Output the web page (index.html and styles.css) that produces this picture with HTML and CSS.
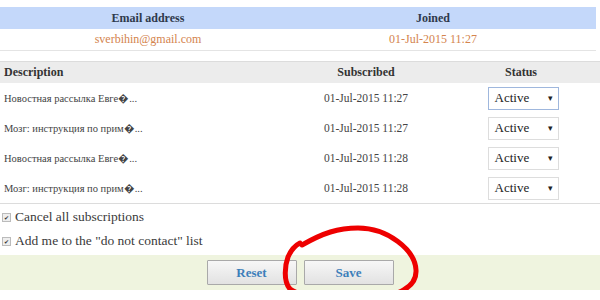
FILE: index.html
```html
<!DOCTYPE html>
<html lang="en">
<head>
  <meta charset="UTF-8">
  <title>Subscriptions</title>
  <link rel="stylesheet" href="styles.css">
</head>
<body>
  <div class="page">
    <table class="user">
      <tr>
        <th class="col-email">Email address</th>
        <th class="col-joined">Joined</th>
      </tr>
      <tr>
        <td class="col-email">sverbihin@gmail.com</td>
        <td class="col-joined">01-Jul-2015 11:27</td>
      </tr>
    </table>

    <table class="subs">
      <tr>
        <th class="desc">Description</th>
        <th class="date">Subscribed</th>
        <th class="status">Status</th>
      </tr>
      <tr>
        <td class="desc">Новостная рассылка Евге�...</td>
        <td class="date">01-Jul-2015 11:27</td>
        <td class="status"><span class="select focus">Active<i>▾</i></span></td>
      </tr>
      <tr>
        <td class="desc">Мозг: инструкция по прим�...</td>
        <td class="date">01-Jul-2015 11:27</td>
        <td class="status"><span class="select">Active<i>▾</i></span></td>
      </tr>
      <tr>
        <td class="desc">Новостная рассылка Евге�...</td>
        <td class="date">01-Jul-2015 11:28</td>
        <td class="status"><span class="select">Active<i>▾</i></span></td>
      </tr>
      <tr>
        <td class="desc">Мозг: инструкция по прим�...</td>
        <td class="date">01-Jul-2015 11:28</td>
        <td class="status"><span class="select">Active<i>▾</i></span></td>
      </tr>
    </table>

    <label class="check"><span class="box">✔</span>Cancel all subscriptions</label>
    <label class="check"><span class="box">✔</span>Add me to the "do not contact" list</label>

    <div class="actions">
      <button class="btn">Reset</button>
      <button class="btn">Save</button>
      <svg class="scribble" width="150" height="80" viewBox="0 0 150 80">
        <path d="M24 20 C45 8 60 3 80 3 C110 3 137 25 138 45 C139 62 120 72 90 73 C60 74 25 74 12 64 C5 56 7 40 10 32 C13 25 18 20 22 18"
              fill="none" stroke="#ee0000" stroke-width="5" stroke-linecap="round"/>
      </svg>
    </div>
  </div>
</body>
</html>
```

FILE: styles.css
```css
body {
  margin: 0;
  font-family: "Liberation Serif", Georgia, serif;
  color: #444444;
  background: #ffffff;
}
.page {
  width: 600px;
  padding-top: 7px;
}
table {
  border-collapse: collapse;
}
.user {
  width: 596px;
}
.user th {
  background: #c4d8fa;
  color: #2f3a4c;
  font-size: 12px;
  height: 22px;
  padding: 0;
}
.user td {
  color: #d4844e;
  font-size: 12px;
  height: 21px;
  padding: 0;
  border-bottom: 1px solid #e4e4e4;
  text-align: center;
}
.user .col-email {
  width: 296px;
}
.user .col-joined {
  padding-right: 26px;
}
.subs {
  width: 600px;
  margin-top: 10px;
  border-top: 1px solid #dcdcdc;
  border-bottom: 1px solid #dcdcdc;
}
.subs th {
  background: #ececec;
  color: #333333;
  font-size: 12px;
  height: 21px;
  padding: 0;
}
.subs td {
  font-size: 11.5px;
  height: 30px;
  padding: 0;
}
.subs td.desc {
  font-size: 10.5px;
}
.subs .desc {
  text-align: left;
  padding-left: 4px;
  width: 286px;
}
.subs .date {
  text-align: center;
  width: 152px;
}
.subs .status {
  text-align: center;
}
.select {
  display: inline-flex;
  align-items: center;
  justify-content: space-between;
  box-sizing: border-box;
  width: 71px;
  height: 23px;
  padding: 0 5px 0 6px;
  border: 1px solid #dddddd;
  background: #ffffff;
  color: #222222;
  font-size: 13px;
  margin-left: 4px;
}
.select.focus {
  border-color: #9fb7dd;
}
.select i {
  font-style: normal;
  font-size: 9px;
}
.check {
  display: flex;
  align-items: center;
  height: 24px;
  font-size: 13.5px;
  color: #3a3a3a;
}
.check:first-of-type {
  margin-top: 1px;
}
.box {
  display: inline-flex;
  align-items: center;
  justify-content: center;
  width: 7px;
  height: 7px;
  margin: 0 4px 0 2px;
  border: 1px solid #bbbbbb;
  background: #eeeeee;
  font-size: 6px;
  color: #333333;
}
.actions {
  position: relative;
  margin-top: 2px;
  height: 35px;
  background: #eff4df;
  display: flex;
  justify-content: center;
  align-items: center;
  gap: 7px;
}
.btn {
  width: 90px;
  height: 25px;
  border: 1px solid #a9a9a9;
  border-radius: 1px;
  background: linear-gradient(#f7f7f7, #e2e2e2);
  color: #3d7fba;
  font-family: "Liberation Serif", Georgia, serif;
  font-weight: bold;
  font-size: 13px;
}
.scribble {
  position: absolute;
  left: 278px;
  top: -30px;
}
```
